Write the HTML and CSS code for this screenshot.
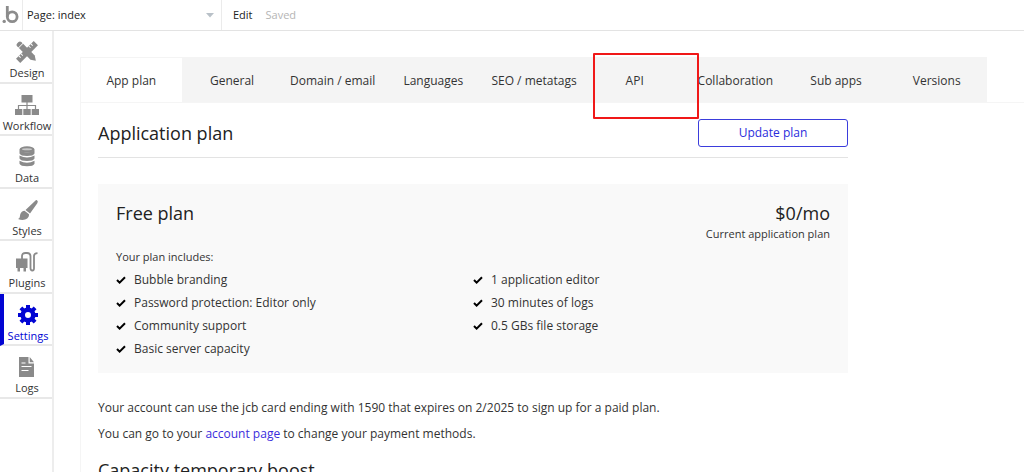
FILE: index.html
```
<!DOCTYPE html>
<html lang="en">
<head>
<meta charset="utf-8">
<title>Settings - App plan</title>
<link rel="stylesheet" href="styles.css">
</head>
<body>
<header class="topbar">
  <a class="logo" href="#" aria-label="Home">
    <svg width="22" height="30" viewBox="0 0 22 30"><circle cx="4.200" cy="21.400" r="1.700" fill="#8c8c8c"/><path d="M7.300 6v10.800" fill="none" stroke="#8c8c8c" stroke-width="2.800"/><circle cx="12.200" cy="16.800" r="4.900" fill="none" stroke="#8c8c8c" stroke-width="2.800"/></svg>
  </a>
  <div class="page-picker">
    <select class="page-select" aria-label="Page"><option>Page: index</option></select>
    <svg class="caret" width="8" height="5" viewBox="0 0 8 5"><path d="M0 0h8L4 4.500z" fill="#b9c1c8"/></svg>
  </div>
  <button class="edit" type="button">Edit</button>
  <span class="saved">Saved</span>
</header>
<div class="shell">
  <nav class="sidebar" aria-label="Editor">
   <div class="side-list">
    <a class="side-item" href="#">
      <svg class="side-icon" viewBox="0 0 24 24"><g transform="rotate(45 12 12)"><path d="M9-.5h6v25H9z" fill="#8a8a8a"/><path d="M9 3.500h2.500M9 6.500h2.500M9 17.500h2.500M9 20.500h2.500" stroke="#fff"/></g><g transform="rotate(-45 12 12)"><path d="M9 3.500h6V20l-3 4.500L9 20z" fill="#8a8a8a"/><path d="M9 2.700V1q0-2 2-2h2q2 0 2 2v1.700z" fill="#8a8a8a"/></g></svg>
      <span>Design</span>
    </a>
    <a class="side-item" href="#">
      <svg class="side-icon" viewBox="0 0 24 24"><path d="M6.500 2h11v7.500h-11zM0 16h7.300v6H0zM8.300 16h7.400v6H8.300zM16.700 16H24v6h-7.300z" fill="#8a8a8a"/><path d="M12 9v7M3.500 16v-3.500h17V16" fill="none" stroke="#8a8a8a" stroke-width="1.200"/></svg>
      <span>Workflow</span>
    </a>
    <a class="side-item" href="#">
      <svg class="side-icon" viewBox="0 0 24 24"><g fill="#8a8a8a"><ellipse cx="12" cy="4.500" rx="7.500" ry="3.200"/><path d="M4.500 5q7.500 5 15 0v3.500q-1 2.500-7.500 2.500t-7.500-2.500zM4.500 10.500q7.500 4 15 0v3q-1 2.500-7.500 2.500t-7.500-2.500zM4.500 15.700q7.500 4 15 0v3q-1 2.500-7.500 2.500t-7.500-2.500z"/></g><ellipse cx="12" cy="4.300" rx="5" ry="1" fill="#c9c9c9"/></svg>
      <span>Data</span>
    </a>
    <a class="side-item" href="#">
      <svg class="side-icon" viewBox="0 0 24 24"><g fill="#8a8a8a"><path d="M22 2.200q1.500 1 .3 3L15 15.500 10.500 12 20 3q1.200-1.200 2-.8z"/><path d="M9.500 12.700l4.500 3.600c.3 5-5.500 7-11 4.700 2.200-.8 1.700-2.500 2.200-4.500.6-2.500 2.500-3.800 4.300-3.800z"/></g></svg>
      <span>Styles</span>
    </a>
    <a class="side-item" href="#">
      <svg class="side-icon" viewBox="0 0 24 24"><path d="M1 8.500h11.500V18H1zM2.500 18H5v3.500H2.500zM8.500 18H11v3.500H8.500z" fill="#8a8a8a"/><path d="M7 9V6.500Q7 3 10.500 3h1.500q3.500 0 3.500 3.500V18q0 2.500 1.800 2.500T19 18V6q0-2.800 3.500-2.800" fill="none" stroke="#8a8a8a" stroke-width="1.800"/></svg>
      <span>Plugins</span>
    </a>
    <a class="side-item side-item-active" href="#" aria-current="page">
      <svg class="side-icon" viewBox="0 0 24 24"><circle cx="12" cy="12" r="5.300" fill="none" stroke="#0205d3" stroke-width="4.600"/><path d="M12 2v4M12 18v4M2 12h4M18 12h4M4.900 4.900l3 3M16.100 16.100l3 3M4.900 19.100l3-3M16.100 7.900l3-3" stroke="#0205d3" stroke-width="4"/></svg>
      <span>Settings</span>
    </a>
    <a class="side-item" href="#">
      <svg class="side-icon" viewBox="0 0 24 24"><path d="M4 2h9.500v6.500H19V22H4zM14.700 2L19 7.300h-4.300z" fill="#8a8a8a"/><path d="M6.500 8h4M6.500 11.500h10M6.500 15.500h7" stroke="#fff" stroke-width="1.200"/></svg>
      <span>Logs</span>
    </a>
   </div>
  </nav>
  <main class="main">
    <nav class="tabs" aria-label="Settings">
      <a class="tab tab-active" href="#" aria-current="page">App plan</a>
      <a class="tab" href="#">General</a>
      <a class="tab" href="#">Domain / email</a>
      <a class="tab" href="#">Languages</a>
      <a class="tab" href="#">SEO / metatags</a>
      <a class="tab" href="#">API<span class="highlight"></span></a>
      <a class="tab" href="#">Collaboration</a>
      <a class="tab" href="#">Sub apps</a>
      <a class="tab" href="#">Versions</a>
    </nav>
    <div class="content">
      <div class="section-head">
        <h1 class="heading">Application plan</h1>
        <button class="update" type="button">Update plan</button>
      </div>
      <section class="card">
        <div class="card-head">
          <h2 class="heading">Free plan</h2>
          <div class="price"><div class="heading">$0/mo</div><div class="small">Current application plan</div></div>
        </div>
        <p class="small includes">Your plan includes:</p>
        <div class="features">
          <ul class="feature-list">
            <li class="feature"><svg class="check" viewBox="0 0 10 8"><path d="M1 4l2.600 2.600L9 1.200" /></svg>Bubble branding</li>
            <li class="feature"><svg class="check" viewBox="0 0 10 8"><path d="M1 4l2.600 2.600L9 1.200" /></svg>Password protection: Editor only</li>
            <li class="feature"><svg class="check" viewBox="0 0 10 8"><path d="M1 4l2.600 2.600L9 1.200" /></svg>Community support</li>
            <li class="feature"><svg class="check" viewBox="0 0 10 8"><path d="M1 4l2.600 2.600L9 1.200" /></svg>Basic server capacity</li>
          </ul>
          <ul class="feature-list">
            <li class="feature"><svg class="check" viewBox="0 0 10 8"><path d="M1 4l2.600 2.600L9 1.200" /></svg>1 application editor</li>
            <li class="feature"><svg class="check" viewBox="0 0 10 8"><path d="M1 4l2.600 2.600L9 1.200" /></svg>30 minutes of logs</li>
            <li class="feature"><svg class="check" viewBox="0 0 10 8"><path d="M1 4l2.600 2.600L9 1.200" /></svg>0.5 GBs file storage</li>
          </ul>
        </div>
      </section>
      <p class="note">Your account can use the jcb card ending with 1590 that expires on 2/2025 to sign up for a paid plan.</p>
      <p class="note">You can go to your <a class="link" href="#">account page</a> to change your payment methods.</p>
      <h2 class="heading boost">Capacity temporary boost</h2>
    </div>
  </main>
</div>
</body>
</html>
```
FILE: styles.css
```
* { box-sizing: border-box; }
body {
  margin: 0;
  min-height: 100vh;
  display: flex;
  flex-direction: column;
  background: #fff;
  color: #333;
  font: 12px/20px "Open Sans", "Noto Sans", sans-serif;
}
h1, h2, p, ul { margin: 0; padding: 0; font-weight: 400; }
a { color: inherit; text-decoration: none; }
button, select { font: inherit; color: inherit; background: none; border: 0; padding: 0; }

.topbar {
  display: flex;
  align-items: center;
  height: 31px;
  border-bottom: 1px solid #e3e3e3;
  font-size: 11px;
  color: #222;
}
.logo { display: flex; }
.page-picker {
  display: flex;
  align-items: center;
  align-self: stretch;
  width: 200px;
  padding-right: 7px;
  border: solid #ebebeb;
  border-width: 0 1px;
}
.page-select { flex: 1; padding-left: 4px; appearance: none; }
.edit { margin: 0 13px 0 11px; }
.saved { color: #b5b5b5; }

.shell { flex: 1; display: flex; }
.sidebar {
  flex: none;
  width: 54px;
  border-right: 2px solid #ededed;
  font-size: 11px;
  line-height: 16px;
}
.side-list { display: grid; grid-template-rows: repeat(7, 1fr); height: 368px; }
.side-item {
  display: flex;
  flex-direction: column;
  align-items: center;
  gap: 1px;
  padding: 9px 0 0 2px;
  border-bottom: 2px solid #e8e8e8;
}
.side-icon { width: 24px; height: 24px; }
.side-item-active { color: #0205d3; border-left: 4px solid #0205d3; padding-left: 0; }

.main {
  flex: 1;
  min-width: 0;
  margin: 26px 0 0 26px;
  border-left: 1px solid #f5f5f5;
}
.tabs { display: flex; padding-right: 37px; border-bottom: 1px solid #f5f5f5; }
.tab {
  flex: 1 1 0;
  min-width: 0;
  position: relative;
  padding: 14px 0 11px;
  background: #f4f4f4;
  text-align: center;
  white-space: nowrap;
}
.tab-active { background: #fff; border-top: 1px solid #f4f4f4; padding-top: 13px; }
.highlight {
  position: absolute;
  z-index: 1;
  left: 9px;
  top: -4px;
  width: 106px;
  height: 66px;
  border: 2px solid #f01818;
  border-radius: 1px;
}

.content { max-width: 785px; padding: 16px 18px 0 17px; }
.heading { font-size: 18px; line-height: 24px; color: #222; }
.section-head {
  display: flex;
  align-items: center;
  justify-content: space-between;
  padding-bottom: 10px;
  border-bottom: 1px solid #e3e3e3;
}
.update {
  width: 150px;
  height: 28px;
  border: 1px solid #3b3ddc;
  border-radius: 3px;
  color: #2a2cdc;
}
.card { margin-top: 26px; padding: 17px 18px 13px; background: #f9f9f9; }
.card-head { display: flex; justify-content: space-between; }
.price { text-align: right; }
.small { font-size: 11px; line-height: 18px; }
.includes { margin-top: 5px; }
.features { display: grid; grid-template-columns: 1fr 1fr; margin-top: 2px; }
.feature-list { list-style: none; }
.feature { display: flex; align-items: center; gap: 8px; line-height: 23px; }
.check { width: 10px; height: 8px; fill: none; stroke: #000; stroke-width: 2; }
.note { margin-top: 6px; }
.card + .note { margin-top: 25px; }
.link { color: #3b2ddc; }
.boost { margin: 14px 0 -24px; }
```
